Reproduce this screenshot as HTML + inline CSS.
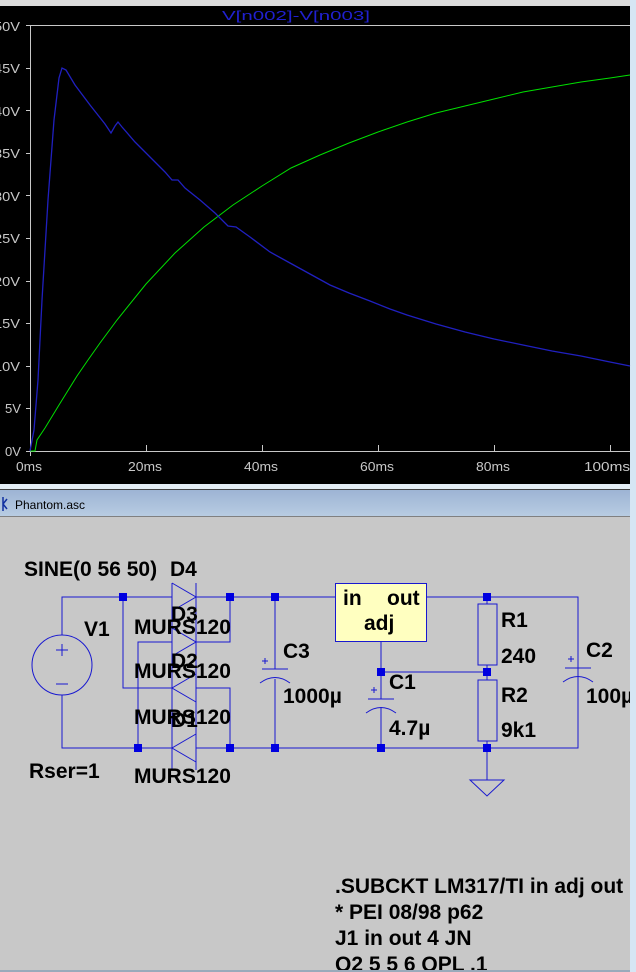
<!DOCTYPE html>
<html><head><meta charset="utf-8"><style>
html,body{margin:0;padding:0;width:636px;height:972px;overflow:hidden;background:#c8c8c8;}
</style></head><body>
<svg width="636" height="972" xmlns="http://www.w3.org/2000/svg" style="position:absolute;left:0;top:0">
<rect x="0" y="0" width="636" height="972" fill="#c8c8c8"/>
<rect x="0" y="0" width="636" height="6" fill="#dcdcdc"/>
<rect x="0" y="6" width="636" height="478" fill="#000"/>
<rect x="630" y="0" width="6" height="972" fill="#d6e6f4"/>
<text x="222" y="20" fill="#2020d0" font-family="Liberation Sans, sans-serif" font-size="13" textLength="148" lengthAdjust="spacingAndGlyphs">V[n002]-V[n003]</text>
<g stroke="#c8c8c8" stroke-width="1" fill="none">
<line x1="30" y1="25.5" x2="630" y2="25.5"/>
<line x1="30" y1="451.5" x2="630" y2="451.5"/>
<line x1="30.5" y1="25" x2="30.5" y2="456"/>
<line x1="26" y1="68.5" x2="30" y2="68.5"/><line x1="26" y1="110.5" x2="30" y2="110.5"/><line x1="26" y1="153.5" x2="30" y2="153.5"/><line x1="26" y1="195.5" x2="30" y2="195.5"/><line x1="26" y1="238.5" x2="30" y2="238.5"/><line x1="26" y1="281.5" x2="30" y2="281.5"/><line x1="26" y1="323.5" x2="30" y2="323.5"/><line x1="26" y1="366.5" x2="30" y2="366.5"/><line x1="26" y1="408.5" x2="30" y2="408.5"/><line x1="26" y1="25.5" x2="30" y2="25.5"/><line x1="26" y1="451.5" x2="30" y2="451.5"/>
<line x1="146.5" y1="451" x2="146.5" y2="445"/><line x1="262.5" y1="451" x2="262.5" y2="445"/><line x1="378.5" y1="451" x2="378.5" y2="445"/><line x1="494.5" y1="451" x2="494.5" y2="445"/><line x1="610.5" y1="451" x2="610.5" y2="445"/>
</g>
<g fill="#c8c8c8" font-family="Liberation Sans, sans-serif" font-size="13">
<text x="-6" y="31" textLength="26" lengthAdjust="spacingAndGlyphs">50V</text>
<text x="-6" y="73" textLength="26" lengthAdjust="spacingAndGlyphs">45V</text>
<text x="-6" y="116" textLength="26" lengthAdjust="spacingAndGlyphs">40V</text>
<text x="-6" y="158" textLength="26" lengthAdjust="spacingAndGlyphs">35V</text>
<text x="-6" y="201" textLength="26" lengthAdjust="spacingAndGlyphs">30V</text>
<text x="-6" y="243" textLength="26" lengthAdjust="spacingAndGlyphs">25V</text>
<text x="-6" y="286" textLength="26" lengthAdjust="spacingAndGlyphs">20V</text>
<text x="-6" y="328" textLength="26" lengthAdjust="spacingAndGlyphs">15V</text>
<text x="-6" y="371" textLength="26" lengthAdjust="spacingAndGlyphs">10V</text>
<text x="5" y="413" textLength="16" lengthAdjust="spacingAndGlyphs">5V</text>
<text x="5" y="456" textLength="16" lengthAdjust="spacingAndGlyphs">0V</text>
<text x="16" y="471" textLength="26" lengthAdjust="spacingAndGlyphs">0ms</text>
<text x="128" y="471" textLength="34" lengthAdjust="spacingAndGlyphs">20ms</text>
<text x="244" y="471" textLength="34" lengthAdjust="spacingAndGlyphs">40ms</text>
<text x="360" y="471" textLength="34" lengthAdjust="spacingAndGlyphs">60ms</text>
<text x="476" y="471" textLength="34" lengthAdjust="spacingAndGlyphs">80ms</text>
<text x="584" y="471" textLength="46" lengthAdjust="spacingAndGlyphs">100ms</text>
</g>
<polyline fill="none" stroke="#00e000" stroke-width="1" points="30,451 35,451 37,440 45,428 59,405 77,376 88,360 100,343 117,320 146,284 175,253 204,227 233,205 262,186 291,168 320,155 349,143 378,132 407,122 436,113 465,106 494,99 523,92 552,87 581,82 610,78 630,75"/>
<polyline fill="none" stroke="#2020c0" stroke-width="1.3" points="30,451 34,430 38,380 42,300 48,200 54,120 59,78 62,68 66,70 75,85 90,105 105,124 111,133 115,126 118,122 122,127 135,142 150,157 165,172 172,180 178,180 185,188 200,200 215,213 228,226 236,227 250,237 270,252 290,263 310,274 330,285 349,293 370,301 390,309 407,315 436,324 465,332 494,339 523,345 552,351 581,356 610,362 630,366"/>
<rect x="0" y="484" width="630" height="5" fill="#e4eef6"/>
<rect x="0" y="489" width="630" height="1" fill="#404040"/>
<defs><linearGradient id="tb" x1="0" y1="0" x2="0" y2="1"><stop offset="0" stop-color="#9db4d4"/><stop offset="1" stop-color="#b8cce2"/></linearGradient></defs>
<rect x="0" y="490" width="630" height="26" fill="url(#tb)"/>
<rect x="0" y="516" width="630" height="1" fill="#808080"/>
<path d="M3 497 L3 511 M3 504 L7 499 M3 504 L7 509" stroke="#1030a0" stroke-width="1.5" fill="none"/>
<text x="15" y="509" font-family="Liberation Sans, sans-serif" font-size="12" fill="#000">Phantom.asc</text>
<g stroke="#1818d0" stroke-width="1" fill="none">
<polyline points="62,635 62,597 172,597"/>
<polyline points="62,695 62,748 172,748"/>
<circle cx="62" cy="665" r="30"/>
<line x1="62" y1="644" x2="62" y2="656"/><line x1="56" y1="650" x2="68" y2="650"/><line x1="56" y1="684" x2="68" y2="684"/>
<line x1="172" y1="583" x2="172" y2="770"/><line x1="196" y1="583" x2="196" y2="770"/>
<polyline points="172,583 196,597 172,611"/>
<polyline points="172,628 196,642 172,656"/>
<polyline points="196,674 172,688 196,702"/>
<polyline points="196,734 172,748 196,762"/>
<polyline points="123,597 123,688 172,688"/>
<polyline points="138,748 138,642 172,642"/>
<polyline points="196,597 335,597"/>
<polyline points="196,642 230,642 230,597"/>
<polyline points="196,688 230,688 230,748"/>
<polyline points="196,748 381,748 578,748 578,597 427,597"/>
<line x1="275" y1="597" x2="275" y2="669"/><line x1="275" y1="679" x2="275" y2="748"/>
<line x1="262" y1="669" x2="288" y2="669"/><path d="M260 683 Q275 672 290 683"/>
<line x1="262" y1="661" x2="268" y2="661"/><line x1="265" y1="658" x2="265" y2="664"/>
<line x1="381" y1="642" x2="381" y2="699"/><line x1="381" y1="708" x2="381" y2="748"/>
<line x1="368" y1="699" x2="394" y2="699"/><path d="M366 713 Q381 702 396 713"/>
<line x1="371" y1="690" x2="377" y2="690"/><line x1="374" y1="687" x2="374" y2="693"/>
<line x1="381" y1="672" x2="487" y2="672"/>
<line x1="487" y1="597" x2="487" y2="604"/><rect x="478" y="604" width="19" height="61"/><line x1="487" y1="665" x2="487" y2="680"/><rect x="478" y="680" width="19" height="61"/><line x1="487" y1="741" x2="487" y2="780"/>
<polygon points="470,780 504,780 487,796"/>
<line x1="565" y1="668" x2="591" y2="668"/><path d="M563 682 Q578 671 593 682"/>
<line x1="568" y1="659" x2="574" y2="659"/><line x1="571" y1="656" x2="571" y2="662"/>
<line x1="578" y1="597" x2="578" y2="668"/><line x1="578" y1="678" x2="578" y2="748"/>
</g>
<rect x="335.5" y="583.5" width="91" height="58" fill="#ffffc0" stroke="#1818d0"/>
<g fill="#0000e0">
<rect x="119" y="593" width="8" height="8"/><rect x="226" y="593" width="8" height="8"/><rect x="271" y="593" width="8" height="8"/><rect x="483" y="593" width="8" height="8"/>
<rect x="134" y="744" width="8" height="8"/><rect x="226" y="744" width="8" height="8"/><rect x="271" y="744" width="8" height="8"/><rect x="377" y="744" width="8" height="8"/><rect x="483" y="744" width="8" height="8"/>
<rect x="377" y="668" width="8" height="8"/><rect x="483" y="668" width="8" height="8"/>
</g>
<g font-family="Liberation Sans, sans-serif" font-size="21" font-weight="bold" fill="#000">
<text x="24" y="576">SINE(0 56 50)</text><text x="170" y="576">D4</text>
<text x="84" y="636">V1</text>
<text x="171" y="621">D3</text><text x="134" y="634">MURS120</text>
<text x="171" y="668">D2</text><text x="134" y="678">MURS120</text>
<text x="134" y="724">MURS120</text><text x="171" y="727">D1</text>
<text x="29" y="778">Rser=1</text><text x="134" y="783">MURS120</text>
<text x="283" y="658">C3</text><text x="283" y="703">1000µ</text>
<text x="343" y="605">in</text><text x="387" y="605">out</text><text x="364" y="630">adj</text>
<text x="389" y="689">C1</text><text x="389" y="735">4.7µ</text>
<text x="501" y="627">R1</text><text x="501" y="663">240</text>
<text x="501" y="702">R2</text><text x="501" y="737">9k1</text>
<text x="586" y="657">C2</text><text x="586" y="703">100µ</text>
<text x="335" y="893">.SUBCKT LM317/TI in adj out</text>
<text x="335" y="919">* PEI 08/98 p62</text>
<text x="335" y="945">J1 in out 4 JN</text>
<text x="335" y="971">Q2 5 5 6 QPL .1</text>
</g>
<rect x="630" y="490" width="6" height="482" fill="#d6e6f4"/>
<rect x="0" y="970" width="630" height="2" fill="#9ab"/>
</svg>
</body></html>
